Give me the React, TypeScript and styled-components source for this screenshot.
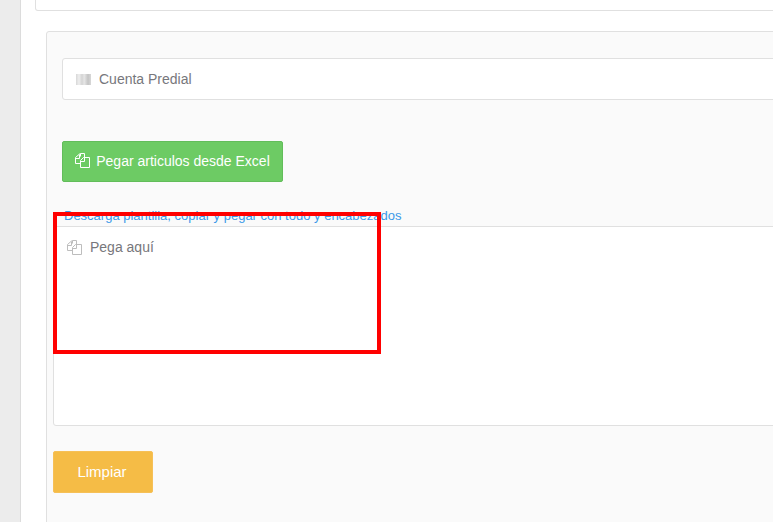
import React from "react";
import styled, { createGlobalStyle } from "styled-components";

const Global = createGlobalStyle`
  html, body { margin: 0; padding: 0; width: 773px; height: 522px; overflow: hidden; background: #fff; }
  body { font-family: "Liberation Sans", Arial, sans-serif; font-size: 14px; color: #676a6c; }
`;

const Page = styled.div`
  position: relative;
  display: flex;
  width: 773px;
  height: 522px;
  overflow: hidden;
`;
const Sidebar = styled.div`
  flex: 0 0 20px;
  background: #ececec;
  border-right: 1px solid #dcdcdc;
`;
const Content = styled.div`
  flex: 0 0 900px;
  padding-left: 14px;
`;
const TopCard = styled.div`
  height: 10px;
  background: #fff;
  border: 1px solid #e0e0e0;
  border-top: none;
  border-radius: 0 0 3px 3px;
`;
const Panel = styled.div`
  margin: 20px 0 0 11px;
  height: 500px;
  padding: 26px 0 0 6px;
  background: #fafafa;
  border: 1px solid #e0e0e0;
  border-radius: 3px 0 0 0;
`;
const InputBox = styled.div`
  margin-left: 9px;
  height: 40px;
  display: flex;
  align-items: center;
  gap: 8px;
  padding-left: 13px;
  background: #fff;
  border: 1px solid #e0e0e0;
  border-radius: 3px;
  color: #77777c;
`;
const Barcode = styled.span`
  width: 15px;
  height: 11px;
  background: linear-gradient(90deg, #d8d8d8 0, #eee 20%, #d4d4d4 40%, #e6e6e6 55%, #c4c4c4 80%, #d8d8d8 100%);
`;
const GreenButton = styled.button`
  margin: 41px 0 0 9px;
  width: 221px;
  height: 41px;
  display: flex;
  align-items: center;
  justify-content: center;
  gap: 6px;
  padding: 0 0 2px;
  background: #6dcb64;
  border: 1px solid #62bd5a;
  border-radius: 2px;
  color: #fff;
  font: inherit;
`;
const HelpLink = styled.a`
  display: block;
  margin: 26px 0 0 11px;
  height: 18px;
  line-height: 16px;
  font-size: 13px;
  color: #3b99e8;
`;
const PasteArea = styled.div`
  height: 200px;
  box-sizing: border-box;
  display: flex;
  align-items: flex-start;
  gap: 8px;
  padding: 11px 0 0 13px;
  background: #fff;
  border: 1px solid #e0e0e0;
  border-radius: 0 0 0 3px;
  color: #77777c;
  line-height: 18px;
`;
const PasteIconSlot = styled.span`
  display: flex;
  margin-top: 2px;
`;
const YellowButton = styled.button`
  display: block;
  margin-top: 25px;
  width: 100px;
  height: 42px;
  padding: 0 2px 1px 0;
  background: #f5bc46;
  border: 1px solid #f6c057;
  border-radius: 2px;
  color: #fff;
  font: inherit;
  font-size: 15px;
`;
const Highlight = styled.div`
  position: absolute;
  left: 53px;
  top: 212px;
  width: 320px;
  height: 134px;
  border: 4px solid #ff0000;
`;

const CopyIcon = ({ color }: { color: string }) => (
  <svg width="15" height="15" viewBox="0 0 15 15" fill="none" stroke={color} strokeWidth="1">
    <path d="M5.5 3.5 V0.5 H9.5 V4" />
    <path d="M5.5 10.5 H0.5 V4.5 L4.5 1 H5.5" />
    <path d="M0.5 5.5 H4.5 V1.5" />
    <path d="M5.5 7.5 L8.5 4.5 H14.5 V14.5 H5.5 Z" />
    <path d="M5.5 8.5 H9.5 V4.5" />
  </svg>
);

export default function App() {
  return (
    <Page>
      <Global />
      <Sidebar />
      <Content>
        <TopCard />
        <Panel>
          <InputBox>
            <Barcode />
            Cuenta Predial
          </InputBox>
          <GreenButton>
            <CopyIcon color="#ffffff" />
            Pegar articulos desde Excel
          </GreenButton>
          <HelpLink>Descarga plantilla, copiar y pegar con todo y encabezados</HelpLink>
          <PasteArea>
            <PasteIconSlot>
              <CopyIcon color="#bdbdbd" />
            </PasteIconSlot>
            Pega aquí
          </PasteArea>
          <YellowButton>Limpiar</YellowButton>
        </Panel>
      </Content>
      <Highlight />
    </Page>
  );
}
